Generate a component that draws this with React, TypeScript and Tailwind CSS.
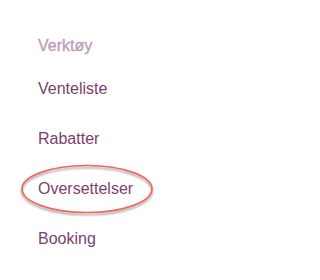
export default function App() {
  const items = ['Venteliste', 'Rabatter', 'Oversettelser', 'Booking']

  return (
    <div
      className="relative w-[265px] h-[280px] bg-white overflow-hidden"
      style={{ fontFamily: '"Liberation Sans", Arial, sans-serif' }}
    >
      <nav className="pt-[36px] pl-[38px]">
        <h3 className="h-5 leading-5 text-base font-medium text-[#bc9db5] [-webkit-text-stroke:0.35px_#bc9db5]">
          Verktøy
        </h3>
        <ul className="mt-2">
          {items.map((item) => (
            <li key={item} className="leading-[50px] text-base text-[#7b3f6a]">
              {item}
            </li>
          ))}
        </ul>
      </nav>

      {/* hand-drawn highlight around "Oversettelser" */}
      <svg
        className="absolute left-[16px] top-[158px] pointer-events-none"
        width="146"
        height="66"
        viewBox="0 0 146 66"
      >
        <defs>
          <filter id="shadow" x="-10%" y="-20%" width="120%" height="150%">
            <feDropShadow dx="0" dy="2" stdDeviation="1.3" floodColor="#000" floodOpacity="0.4" />
          </filter>
        </defs>
        <ellipse
          cx="71"
          cy="31"
          rx="65"
          ry="23.5"
          fill="none"
          stroke="#f06b5c"
          strokeWidth="1.7"
          filter="url(#shadow)"
        />
      </svg>
    </div>
  )
}
